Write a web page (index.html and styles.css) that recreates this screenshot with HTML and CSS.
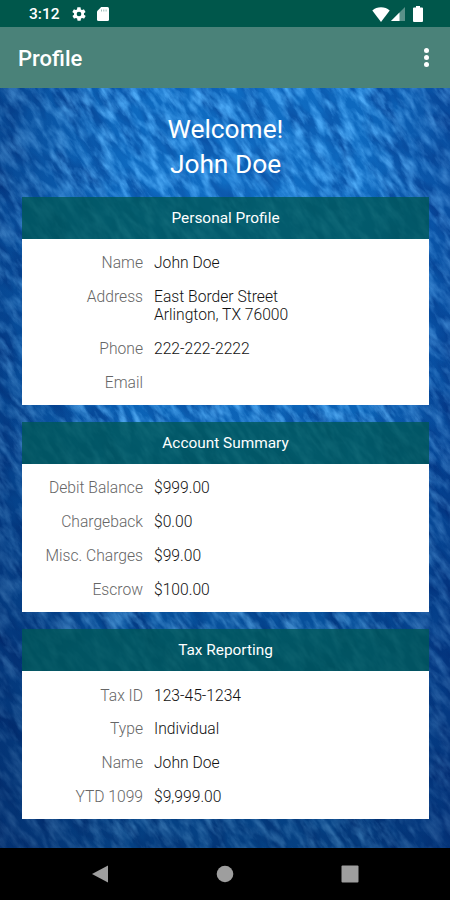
FILE: index.html
```html
<!DOCTYPE html>
<html lang="en">
<head>
  <meta charset="UTF-8" />
  <title>Profile</title>
  <link rel="stylesheet" href="styles.css">
</head>
<body>

  <div class="statusbar">
    <span class="time">3:12</span>
    <svg class="gear" viewBox="0 0 24 24"><path fill-rule="evenodd" d="M19.4 13c0-.3.1-.6.1-1s0-.7-.1-1l2.1-1.6c.2-.2.3-.4.1-.7l-2-3.4c-.1-.2-.4-.3-.6-.2l-2.5 1c-.5-.4-1.100-.7-1.700-1l-.4-2.600c0-.3-.2-.5-.5-.5h-4c-.2 0-.4.200-.5.500l-.4 2.600c-.6.300-1.200.600-1.700 1l-2.500-1c-.2-.1-.5 0-.6.200l-2 3.400c-.1.300-.1.500.1.700L4.600 11a8 8 0 0 0 0 2l-2.100 1.600c-.2.200-.2.400-.1.700l2 3.400c.1.200.4.300.6.200l2.500-1c.5.400 1.100.700 1.700 1l.4 2.600c.1.300.3.500.5.500h4c.3 0 .5-.2.5-.5l.4-2.600c.6-.3 1.200-.6 1.700-1l2.500 1c.2.100.5 0 .6-.2l2-3.400c.1-.3.1-.5-.1-.7zM12 15.500a3.500 3.500 0 1 1 0-7 3.500 3.500 0 0 1 0 7z"/></svg>
    <svg class="sdcard" viewBox="0 0 12 14"><path d="M4.200 0H10.500Q12 0 12 1.500V12.500Q12 14 10.500 14H1.500Q0 14 0 12.500V4.200Z"/><path class="slots" d="M4.500 2.500V4.500M6.800 2.500V4.500M9.100 2.500V4.500"/></svg>
    <span class="spacer"></span>
    <svg class="wifi" viewBox="0 0 18 15"><path d="M9 15 0.300 3.600Q4 .3 9 .3T17.700 3.600Z"/></svg>
    <svg class="signal" viewBox="0 0 14 14"><path class="faint" d="M14 0V14H0Z"/><path d="M8.500 5.500V14H0Z"/></svg>
    <svg class="battery" viewBox="0 0 10 16"><path d="M3 0H7V1.600H9Q10 1.600 10 2.600V15Q10 16 9 16H1Q0 16 0 15V2.600Q0 1.600 1 1.600H3Z"/></svg>
  </div>

  <header class="appbar">
    <h1>Profile</h1>
    <div class="more"><i></i><i></i><i></i></div>
  </header>

  <main class="content">
    <!-- rippled water behind the cards -->
    <svg class="water" width="1100" height="1100">
      <filter id="waves" x="0" y="0" width="100%" height="100%" color-interpolation-filters="sRGB">
        <feTurbulence type="fractalNoise" baseFrequency="0.045 0.13" numOctaves="5" seed="8" />
        <feColorMatrix values="0 0 0 0 0.32  0 0 0 0 0.68  0 0 0 0 0.97  2.3 0 0 0 -0.88" />
      </filter>
      <filter id="troughs" x="0" y="0" width="100%" height="100%" color-interpolation-filters="sRGB">
        <feTurbulence type="fractalNoise" baseFrequency="0.02 0.05" numOctaves="5" seed="21" />
        <feColorMatrix values="0 0 0 0 0  0 0 0 0 0.22  0 0 0 0 0.54  1.8 0 0 0 -0.75" />
      </filter>
      <rect width="1100" height="1100" filter="url(#troughs)" />
      <rect width="1100" height="1100" filter="url(#waves)" />
    </svg>
    <div class="shade"></div>

    <div class="page">
      <h2>Welcome!<br>John Doe</h2>

      <section class="card">
        <h3>Personal Profile</h3>
        <dl>
          <dt>Name</dt><dd>John Doe</dd>
          <dt>Address</dt><dd>East Border Street<br>Arlington, TX 76000</dd>
          <dt>Phone</dt><dd>222-222-2222</dd>
          <dt>Email</dt><dd></dd>
        </dl>
      </section>

      <section class="card">
        <h3>Account Summary</h3>
        <dl>
          <dt>Debit Balance</dt><dd>$999.00</dd>
          <dt>Chargeback</dt><dd>$0.00</dd>
          <dt>Misc. Charges</dt><dd>$99.00</dd>
          <dt>Escrow</dt><dd>$100.00</dd>
        </dl>
      </section>

      <section class="card">
        <h3>Tax Reporting</h3>
        <dl>
          <dt>Tax ID</dt><dd>123-45-1234</dd>
          <dt>Type</dt><dd>Individual</dd>
          <dt>Name</dt><dd>John Doe</dd>
          <dt>YTD 1099</dt><dd>$9,999.00</dd>
        </dl>
      </section>
    </div>
  </main>

  <nav class="navbar">
    <svg viewBox="0 0 18 18"><path d="M17 .5V17.500L1 9Z"/></svg>
    <svg viewBox="0 0 18 18"><circle cx="9" cy="9" r="8.300"/></svg>
    <svg viewBox="0 0 18 18"><rect x=".5" y=".5" width="17" height="17" rx="1"/></svg>
  </nav>

</body>
</html>
```
FILE: styles.css
```css
* {
  box-sizing: border-box;
}
body {
  margin: 0;
  height: 900px;
  display: flex;
  flex-direction: column;
  font-family: Roboto, sans-serif;
  background: #000;
  overflow: hidden;
}
h1, h2, h3, dl, dd {
  margin: 0;
}

/* status bar */
.statusbar {
  height: 27px;
  flex: none;
  display: flex;
  align-items: center;
  padding: 1px 27px 0 29px;
  background: #00574b;
  color: #fff;
}
.statusbar svg {
  fill: #fff;
  flex: none;
}
.time {
  width: 42px;
  font-size: 15.5px;
  font-weight: 500;
  line-height: 26px;
}
.gear {
  width: 16px;
  height: 16px;
}
.sdcard {
  width: 12px;
  height: 14px;
  margin-left: 10px;
}
.sdcard .slots {
  stroke: #9dbdb8;
  stroke-width: 1;
}
.spacer {
  flex: 1;
}
.wifi {
  width: 18px;
  height: 15px;
}
.signal {
  width: 14px;
  height: 14px;
  margin-left: 1px;
}
.signal .faint {
  opacity: 0.35;
}
.battery {
  width: 10px;
  height: 16px;
  margin-left: 8px;
}

/* app bar */
.appbar {
  height: 61px;
  flex: none;
  display: flex;
  align-items: center;
  justify-content: space-between;
  padding: 0 21px 0 18px;
  background: #4a8279;
  color: #fff;
}
.appbar h1 {
  padding-top: 2px;
  font-size: 22px;
  font-weight: 500;
}
.more {
  display: flex;
  flex-direction: column;
  gap: 2px;
}
.more i {
  width: 5px;
  height: 5px;
  border-radius: 50%;
  background: #fff;
}

/* content */
.content {
  position: relative;
  height: 760px;
  flex: none;
  overflow: hidden;
  background: #0963b8;
}
.water {
  position: absolute;
  left: -325px;
  top: -170px;
  transform: rotate(55deg);
}
.shade {
  position: absolute;
  inset: 0;
  background:
    radial-gradient(ellipse 300px 420px at 55% 12%, rgba(40, 140, 230, 0.25), transparent),
    linear-gradient(90deg, rgba(0, 25, 85, 0.4), transparent 28%, transparent 80%, rgba(0, 25, 100, 0.35)),
    linear-gradient(180deg, transparent 35%, rgba(0, 25, 70, 0.48));
}
.page {
  position: relative;
  padding: 24px 21px 0 22px;
}
.page h2 {
  height: 85px;
  color: #fff;
  font-size: 26.3px;
  font-weight: 400;
  line-height: 35px;
  text-align: center;
}
.card {
  margin-bottom: 17px;
}
.card h3 {
  height: 41.7px;
  background: rgba(0, 87, 87, 0.8);
  color: #fff;
  font-size: 15.4px;
  font-weight: 400;
  line-height: 42px;
  text-align: center;
}
.card dl {
  display: grid;
  grid-template-columns: 121px 1fr;
  column-gap: 11px;
  row-gap: 15.75px;
  padding: 15.6px 0 13.6px;
  background: #fff;
  font-size: 15.65px;
  font-weight: 300;
  line-height: 18px;
}
.card dt {
  color: #666;
  text-align: right;
}
.card dd {
  color: #111;
}

/* system navigation */
.navbar {
  flex: 1;
  display: flex;
  align-items: center;
  justify-content: space-between;
  padding: 0 91px;
  background: #000;
}
.navbar svg {
  width: 18px;
  height: 18px;
  fill: #9e9e9e;
}
```
